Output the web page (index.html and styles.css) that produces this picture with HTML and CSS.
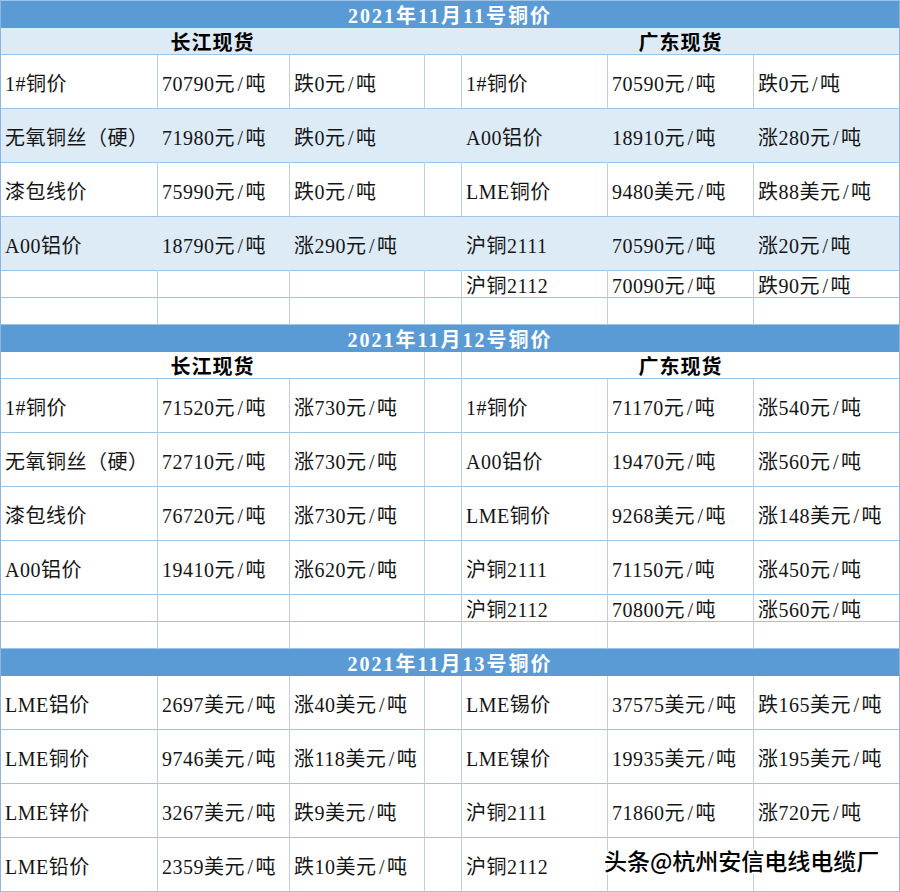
FILE: index.html
```html
<!DOCTYPE html>
<html lang="zh-CN">
<head>
<meta charset="utf-8">
<title>铜价</title>
<link rel="stylesheet" href="styles.css">
</head>
<body>
<div class="sheet">
  <div class="row title"><div class="c">2021年11月11号铜价</div></div>
  <div class="row head fill"><div class="c span3">长江现货</div><div class="c"></div><div class="c span3">广东现货</div></div>
  <div class="row tall"><div class="c">1#铜价</div><div class="c">70790元<span class="sl">/</span>吨</div><div class="c">跌0元<span class="sl">/</span>吨</div><div class="c"></div><div class="c">1#铜价</div><div class="c">70590元<span class="sl">/</span>吨</div><div class="c">跌0元<span class="sl">/</span>吨</div></div>
  <div class="row tall fill"><div class="c">无氧铜丝（硬）</div><div class="c">71980元<span class="sl">/</span>吨</div><div class="c">跌0元<span class="sl">/</span>吨</div><div class="c"></div><div class="c">A00铝价</div><div class="c">18910元<span class="sl">/</span>吨</div><div class="c">涨280元<span class="sl">/</span>吨</div></div>
  <div class="row tall"><div class="c">漆包线价</div><div class="c">75990元<span class="sl">/</span>吨</div><div class="c">跌0元<span class="sl">/</span>吨</div><div class="c"></div><div class="c">LME铜价</div><div class="c">9480美元<span class="sl">/</span>吨</div><div class="c">跌88美元<span class="sl">/</span>吨</div></div>
  <div class="row tall fill"><div class="c">A00铝价</div><div class="c">18790元<span class="sl">/</span>吨</div><div class="c">涨290元<span class="sl">/</span>吨</div><div class="c"></div><div class="c">沪铜2111</div><div class="c">70590元<span class="sl">/</span>吨</div><div class="c">涨20元<span class="sl">/</span>吨</div></div>
  <div class="row short"><div class="c"></div><div class="c"></div><div class="c"></div><div class="c"></div><div class="c">沪铜2112</div><div class="c">70090元<span class="sl">/</span>吨</div><div class="c">跌90元<span class="sl">/</span>吨</div></div>
  <div class="row short"><div class="c"></div><div class="c"></div><div class="c"></div><div class="c"></div><div class="c"></div><div class="c"></div><div class="c"></div></div>

  <div class="row title"><div class="c">2021年11月12号铜价</div></div>
  <div class="row head"><div class="c span3">长江现货</div><div class="c"></div><div class="c span3">广东现货</div></div>
  <div class="row tall"><div class="c">1#铜价</div><div class="c">71520元<span class="sl">/</span>吨</div><div class="c">涨730元<span class="sl">/</span>吨</div><div class="c"></div><div class="c">1#铜价</div><div class="c">71170元<span class="sl">/</span>吨</div><div class="c">涨540元<span class="sl">/</span>吨</div></div>
  <div class="row tall"><div class="c">无氧铜丝（硬）</div><div class="c">72710元<span class="sl">/</span>吨</div><div class="c">涨730元<span class="sl">/</span>吨</div><div class="c"></div><div class="c">A00铝价</div><div class="c">19470元<span class="sl">/</span>吨</div><div class="c">涨560元<span class="sl">/</span>吨</div></div>
  <div class="row tall"><div class="c">漆包线价</div><div class="c">76720元<span class="sl">/</span>吨</div><div class="c">涨730元<span class="sl">/</span>吨</div><div class="c"></div><div class="c">LME铜价</div><div class="c">9268美元<span class="sl">/</span>吨</div><div class="c">涨148美元<span class="sl">/</span>吨</div></div>
  <div class="row tall"><div class="c">A00铝价</div><div class="c">19410元<span class="sl">/</span>吨</div><div class="c">涨620元<span class="sl">/</span>吨</div><div class="c"></div><div class="c">沪铜2111</div><div class="c">71150元<span class="sl">/</span>吨</div><div class="c">涨450元<span class="sl">/</span>吨</div></div>
  <div class="row short"><div class="c"></div><div class="c"></div><div class="c"></div><div class="c"></div><div class="c">沪铜2112</div><div class="c">70800元<span class="sl">/</span>吨</div><div class="c">涨560元<span class="sl">/</span>吨</div></div>
  <div class="row short"><div class="c"></div><div class="c"></div><div class="c"></div><div class="c"></div><div class="c"></div><div class="c"></div><div class="c"></div></div>

  <div class="row title"><div class="c">2021年11月13号铜价</div></div>
  <div class="row tall"><div class="c">LME铝价</div><div class="c">2697美元<span class="sl">/</span>吨</div><div class="c">涨40美元<span class="sl">/</span>吨</div><div class="c"></div><div class="c">LME锡价</div><div class="c">37575美元<span class="sl">/</span>吨</div><div class="c">跌165美元<span class="sl">/</span>吨</div></div>
  <div class="row tall"><div class="c">LME铜价</div><div class="c">9746美元<span class="sl">/</span>吨</div><div class="c">涨118美元<span class="sl">/</span>吨</div><div class="c"></div><div class="c">LME镍价</div><div class="c">19935美元<span class="sl">/</span>吨</div><div class="c">涨195美元<span class="sl">/</span>吨</div></div>
  <div class="row tall"><div class="c">LME锌价</div><div class="c">3267美元<span class="sl">/</span>吨</div><div class="c">跌9美元<span class="sl">/</span>吨</div><div class="c"></div><div class="c">沪铜2111</div><div class="c">71860元<span class="sl">/</span>吨</div><div class="c">涨720元<span class="sl">/</span>吨</div></div>
  <div class="row tall"><div class="c">LME铅价</div><div class="c">2359美元<span class="sl">/</span>吨</div><div class="c">跌10美元<span class="sl">/</span>吨</div><div class="c"></div><div class="c">沪铜2112</div><div class="c"></div><div class="c"></div></div>

  <div class="watermark">头条@杭州安信电线电缆厂</div>
</div>
</body>
</html>
```

FILE: styles.css
```css
html, body {
  margin: 0;
  padding: 0;
  background: #ffffff;
}

.sheet {
  position: relative;
  width: 900px;
  box-sizing: border-box;
  border-top: 1px solid #9dc3e6;
  border-left: 1px solid #8db4e2;
  font-family: "Liberation Serif", "Noto Sans CJK SC", serif;
  font-size: 20px;
  color: #151515;
}

.row {
  display: grid;
  grid-template-columns: 157px 132px 135px 37px 146px 146px 146px;
}

.c {
  box-sizing: border-box;
  display: flex;
  align-items: center;
  padding: 4px 0 0 4px;
  border-right: 1px solid #c4cde0;
  border-bottom: 1px solid #9dc3e6;
  white-space: nowrap;
  letter-spacing: 0.5px;
  line-height: 1;
}

.sl {
  margin: 0 2px 0 2.5px;
}

.c:last-child {
  border-right-color: #8db4e2;
}

.tall .c {
  height: 54px;
}

.short .c {
  height: 27px;
}

.fill .c {
  background: #ddebf7;
  border-right-color: #ddebf7;
}

.fill .c:last-child {
  border-right-color: #8db4e2;
}

.span3 {
  grid-column: span 3;
}

.head .c {
  height: 27px;
  justify-content: center;
  padding: 3px 0 0 0;
  font-weight: bold;
  letter-spacing: 1px;
  color: #000;
}

.title .c {
  grid-column: 1 / -1;
  height: 27px;
  justify-content: center;
  padding: 4px 0 0 0;
  background: #5b9bd5;
  border-bottom-color: #5b9bd5;
  color: #ffffff;
  font-weight: bold;
  letter-spacing: 2px;
}

.watermark {
  position: absolute;
  left: 603px;
  top: 845px;
  font-family: "Noto Sans CJK SC", sans-serif;
  font-size: 23px;
  font-weight: 500;
  line-height: 28px;
  color: #000;
  white-space: nowrap;
  text-shadow:
    1px 0 0 #fff, -1px 0 0 #fff, 0 1px 0 #fff, 0 -1px 0 #fff,
    1px 1px 0 #fff, -1px -1px 0 #fff, 1px -1px 0 #fff, -1px 1px 0 #fff,
    2px 0 1px #fff, -2px 0 1px #fff, 0 2px 1px #fff, 0 -2px 1px #fff;
}
```
